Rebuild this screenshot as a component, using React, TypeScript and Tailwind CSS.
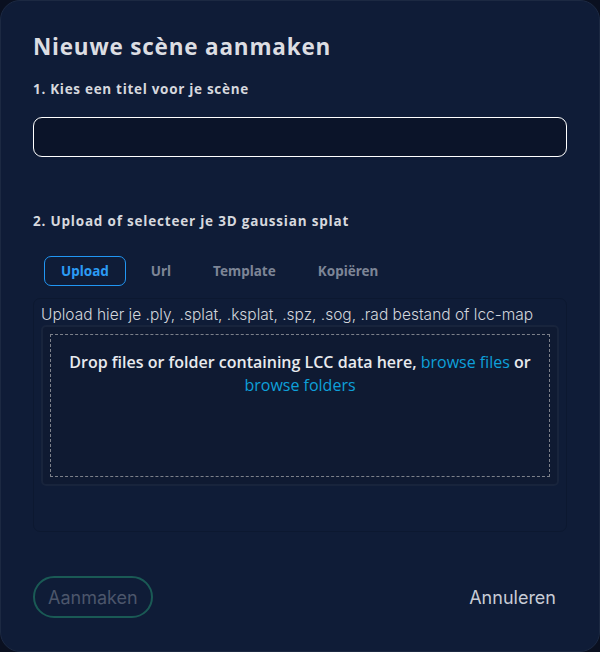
import { useState } from "react";

const tabs = ["Upload", "Url", "Template", "Kopiëren"];

export default function App() {
  const [active, setActive] = useState("Upload");
  const [title, setTitle] = useState("");

  return (
    <div className="h-[652px] w-[600px] bg-[#0a1020]">
      <div className="flex h-full flex-col rounded-[20px] border border-[#1c2942] bg-[#0f1c37] px-[32px] pt-[32px] pb-[33px] font-['Open_Sans',sans-serif]">
        <h2 className="text-[22.5px] font-bold leading-[28px] tracking-[0.8px] text-[#dcdde2]">
          Nieuwe scène aanmaken
        </h2>

        <label className="mt-[20px] text-[13.5px] font-bold leading-[16px] tracking-[0.7px] text-[#d6d8de]">
          1. Kies een titel voor je scène
        </label>
        <input
          value={title}
          onChange={(e) => setTitle(e.target.value)}
          className="mt-[20px] h-[40px] w-full rounded-[9px] border border-white bg-[#0b1429] px-3 text-[15px] text-white outline-none"
        />

        <label className="mt-[56px] text-[13.5px] font-bold leading-[16px] tracking-[0.8px] text-[#d6d8de]">
          2. Upload of selecteer je 3D gaussian splat
        </label>

        <div className="mt-[27px] flex items-center gap-[8px] pl-[11px] font-['Noto_Sans',sans-serif]">
          {tabs.map((t) => (
            <button
              key={t}
              onClick={() => setActive(t)}
              className={
                t === active
                  ? "h-[30px] rounded-[7px] border border-[#2196f3] px-[16px] text-[13.5px] font-bold text-[#2b9bf4]"
                  : "h-[30px] rounded-[7px] border border-transparent px-[16px] text-[13.5px] font-bold text-[#7d8596]"
              }
            >
              {t}
            </button>
          ))}
        </div>

        <div className="mt-[12px] flex h-[234px] flex-col rounded-[7px] border border-[#0c1830] px-[7px] pt-[6px]">
          <p className="font-['Inter',sans-serif] text-[15.5px] font-light leading-[20px] text-[#d3d6dc]">
            Upload hier je .ply, .splat, .ksplat, .spz, .sog, .rad bestand of lcc-map
          </p>
          <div className="h-[161px] rounded-[5px] border-2 border-[#18243c] bg-[#0f1a32] p-[7px]">
            <div className="h-full border border-dashed border-[#7c808a] px-3 pt-[16px] text-center text-[16px] leading-[23px] text-[#e8eaee]">
              <span className="font-semibold">Drop files or folder containing LCC data here, </span>
              <span className="cursor-pointer text-[#0ea0da]">browse files</span>
              <span className="font-semibold"> or </span>
              <span className="cursor-pointer text-[#0ea0da]">browse folders</span>
            </div>
          </div>
        </div>

        <div className="mt-auto flex items-center justify-between font-['Inter',sans-serif]">
          <button
            disabled
            className="h-[42px] rounded-full border-[2.5px] border-[#1a5a55] px-[13px] text-[18px] text-[#4c566b]"
          >
            Aanmaken
          </button>
          <button className="mr-[11px] text-[18px] text-[#c8ccd6]">Annuleren</button>
        </div>
      </div>
    </div>
  );
}
